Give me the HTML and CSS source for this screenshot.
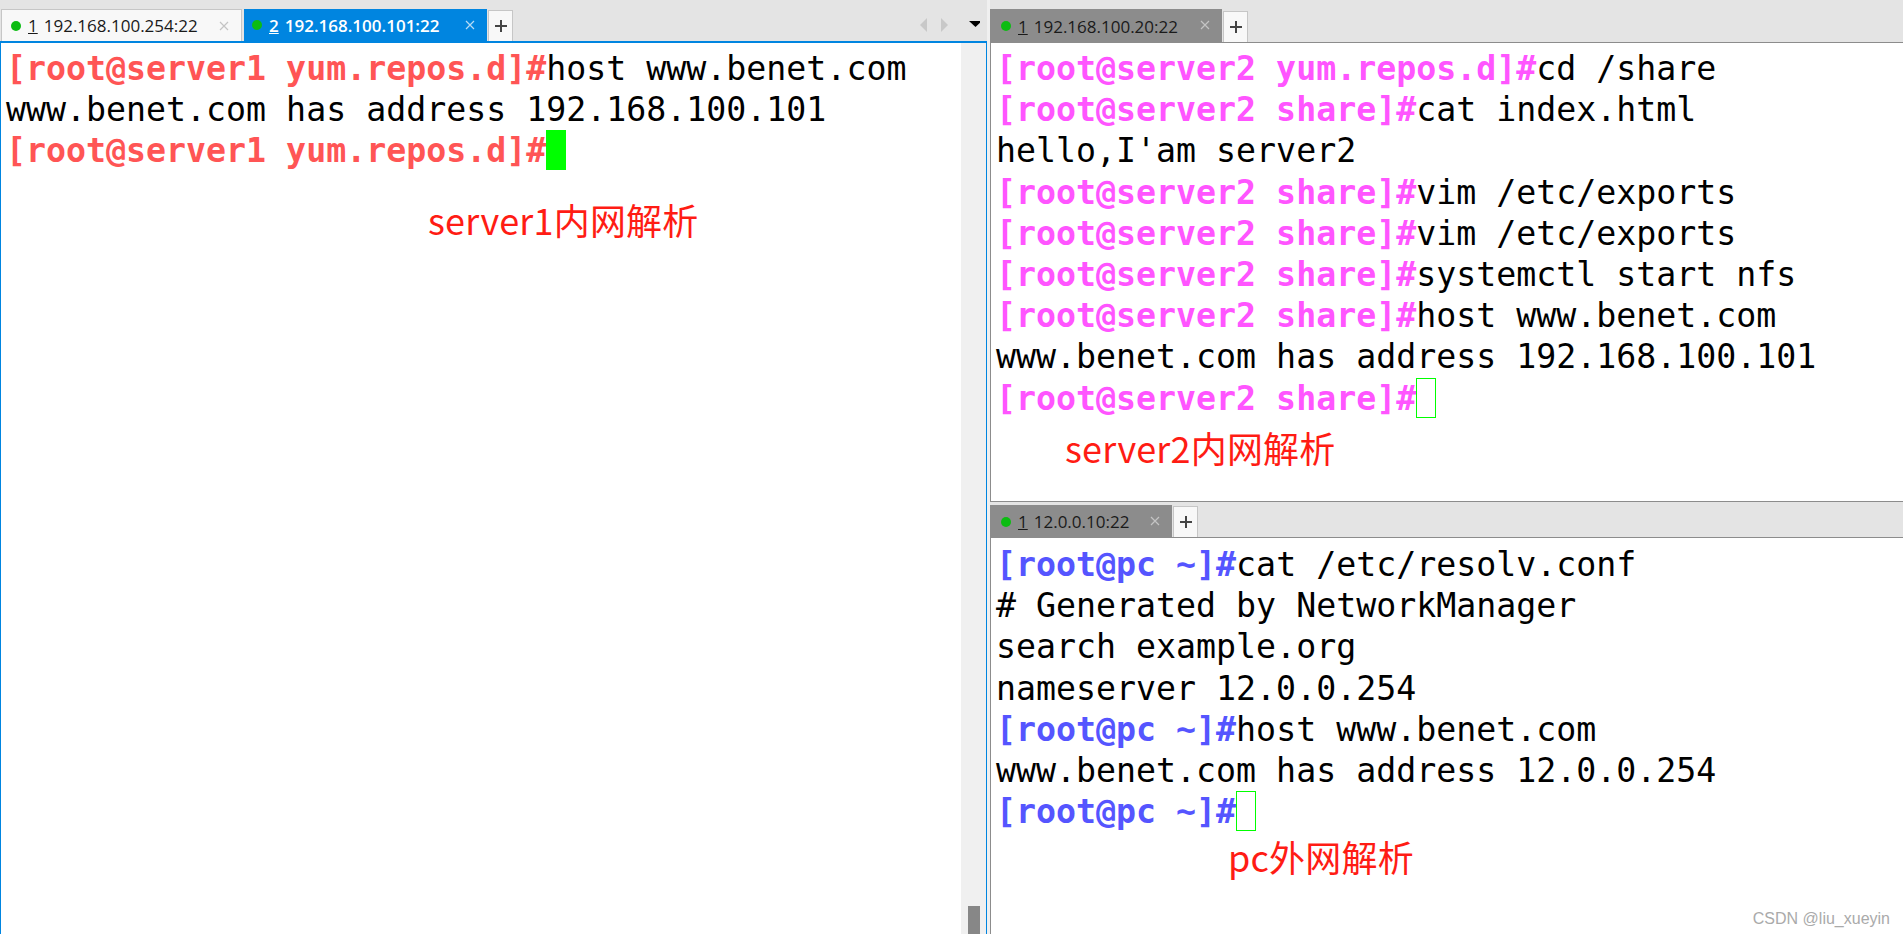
FILE: index.html
```html
<!DOCTYPE html>
<html lang="zh">
<head>
<meta charset="utf-8">
<title>Xshell</title>
<link rel="stylesheet" href="styles.css">
</head>
<body>
<div class="app">
  <section class="left">
    <div class="tabbar">
      <div class="tab tab-plain"><span class="dot"></span><span class="num">1</span><span class="lbl">192.168.100.254:22</span><svg class="x" width="10" height="10" viewBox="0 0 10 10"><path d="M1 1L9 9M9 1L1 9"/></svg></div>
      <div class="tab tab-active"><span class="dot"></span><span class="num">2</span><span class="lbl">192.168.100.101:22</span><svg class="x" width="10" height="10" viewBox="0 0 10 10"><path d="M1 1L9 9M9 1L1 9"/></svg></div>
      <div class="plus"><svg width="14" height="14" viewBox="0 0 14 14"><path d="M7 1V13M1 7H13"/></svg></div>
      <div class="navs">
        <svg width="60" height="16" viewBox="0 0 60 16"><path d="M7 1 L0 8 L7 15Z" fill="#c8c8c8"/><path d="M21 1 L28 8 L21 15Z" fill="#c8c8c8"/><path d="M49 4 L62 4 L55.5 10Z" fill="#000"/></svg>
      </div>
    </div>
    <div class="pane-left">
      <div class="term">
        <div class="ln"><span class="red">[root@server1 yum.repos.d]#</span><span>host www.benet.com</span></div>
        <div class="ln">www.benet.com has address 192.168.100.101</div>
        <div class="ln"><span class="red">[root@server1 yum.repos.d]#</span><span class="cursor-full"></span></div>
      </div>
      <div class="note note-a">server1内网解析</div>
      <div class="scroll"><div class="thumb"></div></div>
    </div>
  </section>
  <div class="right">
    <section class="rtop">
      <div class="tabbar tabbar-r">
        <div class="tab tab-gray tab-r1"><span class="dot"></span><span class="num">1</span><span class="lbl">192.168.100.20:22</span><svg class="x" width="10" height="10" viewBox="0 0 10 10"><path d="M1 1L9 9M9 1L1 9"/></svg></div>
        <div class="plus"><svg width="14" height="14" viewBox="0 0 14 14"><path d="M7 1V13M1 7H13"/></svg></div>
      </div>
      <div class="pane-r">
        <div class="term">
          <div class="ln"><span class="pink">[root@server2 yum.repos.d]#</span><span>cd /share</span></div>
          <div class="ln"><span class="pink">[root@server2 share]#</span><span>cat index.html</span></div>
          <div class="ln">hello,I'am server2</div>
          <div class="ln"><span class="pink">[root@server2 share]#</span><span>vim /etc/exports</span></div>
          <div class="ln"><span class="pink">[root@server2 share]#</span><span>vim /etc/exports</span></div>
          <div class="ln"><span class="pink">[root@server2 share]#</span><span>systemctl start nfs</span></div>
          <div class="ln"><span class="pink">[root@server2 share]#</span><span>host www.benet.com</span></div>
          <div class="ln">www.benet.com has address 192.168.100.101</div>
          <div class="ln"><span class="pink">[root@server2 share]#</span><span class="cursor-box"></span></div>
        </div>
        <div class="note note-b">server2内网解析</div>
      </div>
    </section>
    <section class="rbot">
      <div class="tabbar tabbar-r">
        <div class="tab tab-gray tab-r2"><span class="dot"></span><span class="num">1</span><span class="lbl">12.0.0.10:22</span><svg class="x" width="10" height="10" viewBox="0 0 10 10"><path d="M1 1L9 9M9 1L1 9"/></svg></div>
        <div class="plus"><svg width="14" height="14" viewBox="0 0 14 14"><path d="M7 1V13M1 7H13"/></svg></div>
      </div>
      <div class="pane-r">
        <div class="term term-b">
          <div class="ln"><span class="blue">[root@pc ~]#</span><span>cat /etc/resolv.conf</span></div>
          <div class="ln"># Generated by NetworkManager</div>
          <div class="ln">search example.org</div>
          <div class="ln">nameserver 12.0.0.254</div>
          <div class="ln"><span class="blue">[root@pc ~]#</span><span>host www.benet.com</span></div>
          <div class="ln">www.benet.com has address 12.0.0.254</div>
          <div class="ln"><span class="blue">[root@pc ~]#</span><span class="cursor-box"></span></div>
        </div>
        <div class="note note-c">pc外网解析</div>
        <div class="mark">CSDN @liu_xueyin</div>
      </div>
    </section>
  </div>
</div>
</body>
</html>
```
FILE: styles.css
```css
* { box-sizing: border-box; }
html, body { margin: 0; height: 100%; overflow: hidden; background: #f0f0f0; }
.app { display: flex; width: 1903px; height: 934px; }
.left { width: 987px; display: flex; flex-direction: column; }
.right { width: 913px; margin-left: 3px; display: flex; flex-direction: column; }
.tabbar { height: 41px; flex: none; background: #e4e4e4; display: flex; align-items: flex-end; padding-left: 1px; gap: 2px; position: relative; }
.tabbar-r { height: 43px; padding-left: 0; border-bottom: 1px solid #8c8c8c; }
.tab { height: 32px; display: flex; align-items: center; font: 17px "Open Sans", "Liberation Sans", sans-serif; color: #1a1a1a; padding-left: 11px; position: relative; white-space: nowrap; }
.tab-plain { width: 241px; background: #f8f8f8; border: 1px solid #c6c6c6; border-bottom: 0; padding-left: 9px; }
.tab-active { width: 243px; background: #0085e0; color: #fff; font-weight: 600; padding-left: 8px; }
.tab-gray { background: #8c8c8c; height: 34px; margin-bottom: -1px; }
.tab-r1 { width: 232px; }
.tab-r2 { width: 182px; height: 33px; }
.dot { width: 10px; height: 10px; border-radius: 50%; background: #0cbc12; margin-right: 7px; flex: none; }
.num { text-decoration: underline; margin-right: 6px; }
.x { position: absolute; right: 12px; top: 11px; fill: none; stroke: #c4c4c4; stroke-width: 1.2; }
.tab-active .x { stroke: #b5dbf5; }
.plus { width: 25px; height: 31px; margin-left: -1px; background: #f8f8f8; border: 1px solid #c6c6c6; border-bottom: 0; display: flex; align-items: center; justify-content: center; }
.plus svg { fill: none; stroke: #444; stroke-width: 2; }
.navs { position: absolute; left: 920px; top: 17px; line-height: 0; }
.pane-left { flex: 1; background: #fff; border: 1px solid #0085e0; border-top-width: 2px; border-bottom: 0; position: relative; padding: 5px 0 0 5px; }
.pane-r { background: #fff; border-left: 1px solid #8c8c8c; position: relative; flex: 1; padding: 5px 0 0 5px; }
.rtop { height: 502px; display: flex; flex-direction: column; border-bottom: 1px solid #8c8c8c; }
.rbot { flex: 1; display: flex; flex-direction: column; }
.rbot .tabbar-r { height: 36px; }
.term { font: 33.24px/41.2px "DejaVu Sans Mono", monospace; color: #000; }
.term-b { padding-top: 1px; }
.ln { height: 41.2px; white-space: pre; }
.red { color: #ff5555; font-weight: 700; }
.pink { color: #ff55ff; font-weight: 700; }
.blue { color: #5555ff; font-weight: 700; }
.cursor-full { display: inline-block; width: 20px; height: 40px; background: #00ff00; vertical-align: top; }
.cursor-box { display: inline-block; width: 20px; height: 40px; border: 1px solid #00ff00; vertical-align: top; }
.scroll { position: absolute; right: 0; top: 0; bottom: 0; width: 25px; background: #f0f0f0; }
.thumb { position: absolute; left: 7px; width: 12px; bottom: 0; height: 28px; background: #878787; }
.note { position: absolute; color: #ff1c14; font: 36px/48px "Noto Sans CJK SC", "Noto Sans", sans-serif; letter-spacing: 0.2px; white-space: nowrap; }
.note-a { left: 427px; top: 152px; }
.note-b { left: 74px; top: 380px; }
.note-c { left: 237px; top: 294px; }
.mark { position: absolute; right: 13px; bottom: 5px; font: 16px/20px "Liberation Sans", sans-serif; color: #aaa; }
```
